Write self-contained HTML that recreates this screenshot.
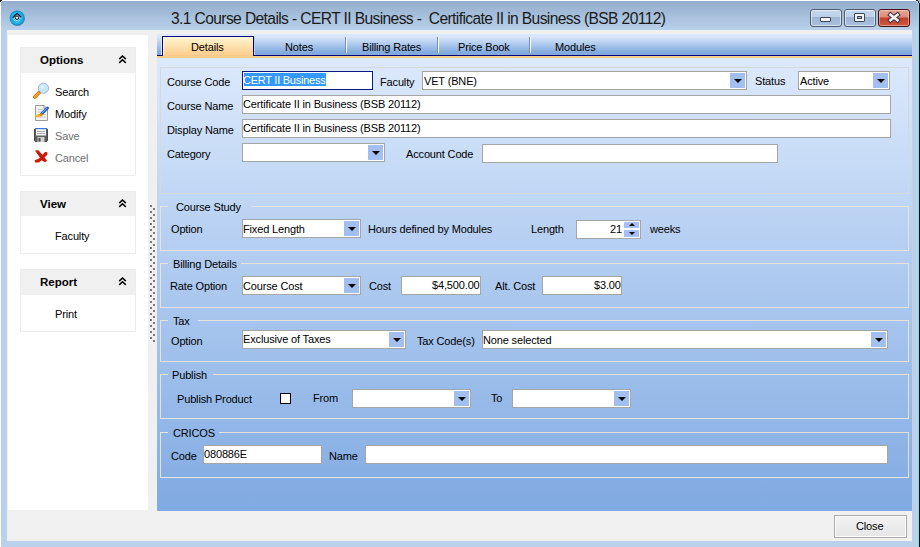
<!DOCTYPE html>
<html><head><meta charset="utf-8">
<style>
*{box-sizing:border-box;margin:0;padding:0}
html,body{width:920px;height:547px;overflow:hidden;background:#fff;font-family:"Liberation Sans",sans-serif;font-size:11px;color:#000}
.a{position:absolute}
.t{position:absolute;white-space:pre;line-height:11px;font-size:11px;letter-spacing:-0.15px;color:#000}
#frame{left:1px;top:1px;width:918px;height:546px;background:#b9d1ea}
#title{left:1px;top:1px;width:917px;height:29px;background:linear-gradient(#93adcc,#b9d1ea)}
#client{left:7px;top:30px;width:905px;height:511px;background:#f0f0f0}
#leftp{left:8px;top:35px;width:140px;height:475px;background:#fff}
.box{position:absolute;left:20px;width:116px;border:1px solid #ededed;background:#fff}
.boxh{position:absolute;left:0;top:0;right:0;background:#f0f0f0}
.hd{font-weight:bold;font-size:11.5px;letter-spacing:0}
.chev{position:absolute;left:118px;width:9px;height:9px}
#tabs{left:157px;top:34px;width:755px;height:21px;background:linear-gradient(#dceafc 0px,#d6e6fb 3px,#80a8dd 19px,#86ace0 21px)}
#navy{left:157px;top:55px;width:755px;height:1px;background:#00007c}
#orange{left:157px;top:56px;width:755px;height:2px;background:#fdd08c}
#panel{left:157px;top:58px;width:755px;height:453px;background:linear-gradient(#dde9fb 0%,#c5daf6 25.2%,#adc9ef 49.4%,#9ebfeb 68.2%,#84ace3 95.8%,#81aae2 100%)}
.grp{position:absolute;left:160px;width:749px;border:1px solid #e6e3dc;border-top:none}
.gl{position:absolute;height:1px;background:#e6e3dc}
.inp{position:absolute;background:#fff;border:1px solid #a5a5a5}
.dd{position:absolute;top:1px;bottom:1px;right:1px;width:15px;background:#a3bff0}
.dd:after{content:"";position:absolute;left:4px;top:6px;border-left:4px solid transparent;border-right:4px solid transparent;border-top:4px solid #000}
.ti{letter-spacing:-0.15px}
.gap{position:absolute;height:6px;background:transparent}
.sep{position:absolute;top:37px;width:2px;height:16px;border-left:1px solid #6a8fc8;border-right:1px solid #fff}
</style></head><body>
<div id="frame" class="a"></div>
<div id="title" class="a"></div>
<div class="a" style="left:918px;top:3px;width:1px;height:544px;background:#7adcf6"></div>
<div class="a" style="left:919px;top:3px;width:1px;height:544px;background:#080808"></div>
<div class="a" style="left:918px;top:0;width:2px;height:3px;background:#b8b8b8"></div>
<div class="a" style="left:916px;top:0;width:2px;height:1px;background:#102020"></div>
<div class="a" style="left:918px;top:1px;width:1px;height:2px;background:#103030"></div>
<div class="a" style="left:916px;top:1px;width:1px;height:1px;background:#b8e4f4"></div>
<div class="a" style="left:917px;top:1px;width:1px;height:2px;background:#a8e8f8"></div>
<div class="a" style="left:0;top:0;width:2px;height:1px;background:#181818"></div>
<div class="a" style="left:0;top:1px;width:1px;height:1px;background:#202020"></div>
<div class="a" style="left:1px;top:1px;width:1px;height:1px;background:#e8f4fa"></div>

<!-- app icon -->
<svg class="a" style="left:9px;top:10px" width="18" height="18" viewBox="0 0 18 18">
 <circle cx="8.4" cy="8.4" r="7.6" fill="#3a4a58" opacity=".55"/>
 <circle cx="8" cy="8" r="7.4" fill="#0c8cc8"/>
 <circle cx="8" cy="7.9" r="6.6" fill="#1eaee8"/>
 <path d="M4 7.5 L8 3.8 L11.8 7.2 L8 11.5 Z" fill="#bfeaff" opacity=".8"/>
 <path d="M3.6 7.8 L8 3.6 L12 7" fill="none" stroke="#101010" stroke-width="1.1"/>
 <path d="M4.2 8.6 L7.2 12.2 M8.8 12.2 L11.8 8.6" fill="none" stroke="#e8faff" stroke-width="1" stroke-dasharray="1 1"/>
 <circle cx="8" cy="7.7" r="1.7" fill="#fff" stroke="#0a0a0a" stroke-width="1"/>
</svg>

<div class="t" style="left:171px;top:11px;font-size:15.6px;line-height:15px;letter-spacing:-0.61px;color:#1a1a1a">3.1 Course Details - CERT II Business -  Certificate II in Business (BSB 20112)</div>

<!-- caption buttons -->
<div class="a" style="left:810px;top:9px;width:32px;height:18px;border:1px solid #4e5b6e;border-radius:3px;background:linear-gradient(#c3d6ec 0,#bcd0e8 7px,#9cb5d3 7px,#a9c1dd 16px);box-shadow:inset 0 0 0 1px rgba(255,255,255,.55)"></div>
<div class="a" style="left:820px;top:17px;width:11px;height:5px;border:1px solid #3d4656;border-radius:1px;background:#f4f4f4"></div>
<div class="a" style="left:844px;top:9px;width:32px;height:18px;border:1px solid #4e5b6e;border-radius:3px;background:linear-gradient(#c3d6ec 0,#bcd0e8 7px,#9cb5d3 7px,#a9c1dd 16px);box-shadow:inset 0 0 0 1px rgba(255,255,255,.55)"></div>
<div class="a" style="left:854px;top:13px;width:11px;height:9px;border:1px solid #3d4656;border-radius:1px;background:#f4f4f4"></div>
<div class="a" style="left:857px;top:16px;width:5px;height:3px;border:1px solid #3d4656;background:#9cb6d6"></div>
<div class="a" style="left:878px;top:9px;width:32px;height:18px;border:1px solid #40101a;border-radius:3px;background:linear-gradient(#e8a493 0,#dc8c78 7px,#c0412a 8px,#d0573c 16px);box-shadow:inset 0 0 0 1px rgba(255,220,210,.5)"></div>
<svg class="a" style="left:886px;top:11px" width="16" height="14" viewBox="0 0 16 14">
 <path d="M4.5 3.8 L11.5 9.2 M11.5 3.8 L4.5 9.2" stroke="#3c3448" stroke-width="4.6" stroke-linecap="square"/>
 <path d="M4.5 3.8 L11.5 9.2 M11.5 3.8 L4.5 9.2" stroke="#f4f4f4" stroke-width="2.6" stroke-linecap="square"/>
</svg>

<div id="client" class="a"></div>
<div id="leftp" class="a"></div>

<!-- left panel boxes -->
<div class="box" style="top:47px;height:129px">
 <div class="boxh" style="height:25px"></div>
</div>
<div class="t hd" style="left:40px;top:55px">Options</div>
<svg class="chev" style="top:55px" viewBox="0 0 9 9"><path d="M1.2 4.1 L4.5 1 L7.8 4.1 M1.2 7.9 L4.5 4.8 L7.8 7.9" fill="none" stroke="#000" stroke-width="1.5"/></svg>

<!-- search icon -->
<svg class="a" style="left:32px;top:82px" width="18" height="17" viewBox="0 0 18 17">
 <path d="M2.8 15 L7.2 10.6" stroke="#c06a10" stroke-width="3.6" stroke-linecap="round"/>
 <path d="M2.8 15 L7.2 10.6" stroke="#f4a428" stroke-width="2.4" stroke-linecap="round"/>
 <path d="M7.5 10.3 L8.6 9.2" stroke="#303040" stroke-width="1.6"/>
 <circle cx="11.5" cy="6.2" r="5.1" fill="#c4eaf8" stroke="#a4a8d8" stroke-width="0.9"/>
 <circle cx="10.2" cy="5" r="1.6" fill="#eefaff" opacity=".8"/>
</svg>
<div class="t" style="left:55px;top:87px;color:#000">Search</div>
<!-- modify icon -->
<svg class="a" style="left:34px;top:104px" width="16" height="18" viewBox="0 0 16 18">
 <path d="M1.5 1.5 H10 L13.5 5 V16.5 H1.5 Z" fill="#f4f4f2" stroke="#9a9a9a"/>
 <path d="M10 1.5 V5 H13.5" fill="#e0e0e0" stroke="#9a9a9a"/>
 <path d="M3.5 5.5h5M3.5 8h8M3.5 10.5h8M3.5 13h8" stroke="#c4c4c4"/>
 <path d="M7.5 10 L13.5 4" stroke="#1f5fd0" stroke-width="3" stroke-linecap="round"/>
 <path d="M8 9.2 L13 4.2" stroke="#8fc0ff" stroke-width="0.9"/>
 <path d="M2 12.2 L7.5 11" stroke="#f6b020" stroke-width="2.4" stroke-linecap="round"/>
 <path d="M6 11.5 L8 9.5" stroke="#e08a10" stroke-width="2.2"/>
</svg>
<div class="t" style="left:55px;top:109px;color:#000">Modify</div>
<!-- save icon -->
<svg class="a" style="left:34px;top:128px" width="14" height="14" viewBox="0 0 14 14">
 <rect x="0.5" y="0.5" width="13" height="13" rx="1.5" fill="#5e5e5e" stroke="#4a4a4a"/>
 <rect x="2" y="1" width="10" height="6.5" fill="#f2f4f6"/>
 <path d="M3 3.5h8M3 5.5h8" stroke="#a8aeb4"/>
 <path d="M1 0.6h12" stroke="#3b78d8" stroke-width="1.2"/>
 <rect x="3.5" y="9" width="7" height="5" fill="#cfcfcf"/>
 <rect x="4.5" y="10" width="2" height="3.5" fill="#4a4a4a"/>
</svg>
<div class="t" style="left:55px;top:131px;color:#707070">Save</div>
<!-- cancel icon -->
<svg class="a" style="left:34px;top:150px" width="14" height="13" viewBox="0 0 14 13">
 <path d="M1 0.5 L4.5 0.3 L13 10.5 L11.5 12.2 L8.5 11 L3 3.5 Z" fill="#cc1a08"/>
 <path d="M0.5 10.5 L5 8.5 L11 2 L13.3 2.2 L13.5 4.5 L8 10 L5 12.5 L1.2 12.4 Z" fill="#c81c06"/>
</svg>
<div class="t" style="left:55px;top:153px;color:#707070">Cancel</div>

<div class="box" style="top:191px;height:63px">
 <div class="boxh" style="height:24px"></div>
</div>
<div class="t hd" style="left:40px;top:199px">View</div>
<svg class="chev" style="top:199px" viewBox="0 0 9 9"><path d="M1.2 4.1 L4.5 1 L7.8 4.1 M1.2 7.9 L4.5 4.8 L7.8 7.9" fill="none" stroke="#000" stroke-width="1.5"/></svg>
<div class="t" style="left:55px;top:231px;color:#000">Faculty</div>

<div class="box" style="top:269px;height:63px">
 <div class="boxh" style="height:25px"></div>
</div>
<div class="t hd" style="left:40px;top:277px">Report</div>
<svg class="chev" style="top:277px" viewBox="0 0 9 9"><path d="M1.2 4.1 L4.5 1 L7.8 4.1 M1.2 7.9 L4.5 4.8 L7.8 7.9" fill="none" stroke="#000" stroke-width="1.5"/></svg>
<div class="t" style="left:55px;top:309px;color:#000">Print</div>

<!-- splitter dots -->
<div class="a" style="left:150px;top:205px;width:6px;height:138px;background-image:radial-gradient(circle at 1px 1px,#7a7a7a 1px,transparent 1.2px),radial-gradient(circle at 4px 4px,#7a7a7a 1px,transparent 1.2px);background-size:6px 6px"></div>

<!-- tabs -->
<div id="tabs" class="a"></div>
<div id="navy" class="a"></div>
<div id="orange" class="a"></div>
<div class="a" style="left:161px;top:35px;width:93px;height:20px;border-left:1px solid #e6f0fc;border-top:1px solid #e6f0fc"></div>
<div class="a" style="left:162px;top:36px;width:92px;height:20px;border:1px solid #00007c;border-bottom:none;background:linear-gradient(#fff6d0,#fdcb8a);box-shadow:inset 1px 1px 0 #fffbe0"></div>
<div class="a" style="left:163px;top:55px;width:90px;height:1px;background:#fdc98a"></div>
<div class="a" style="left:254px;top:37px;width:1px;height:18px;background:#b8d2f4"></div>
<div class="t" style="left:191px;top:42px">Details</div>
<div class="t" style="left:285px;top:42px">Notes</div>
<div class="sep" style="left:345px"></div>
<div class="t" style="left:362px;top:42px">Billing Rates</div>
<div class="sep" style="left:437px"></div>
<div class="t" style="left:458px;top:42px">Price Book</div>
<div class="sep" style="left:529px"></div>
<div class="t" style="left:555px;top:42px">Modules</div>
<div id="panel" class="a"></div>

<!-- details group -->
<div class="a" style="left:160px;top:67px;width:749px;height:127px;border:1px solid #d6d9dc"></div>
<div class="t" style="left:167px;top:77px">Course Code</div>
<div class="a" style="left:242px;top:71px;width:131px;height:19px;border:1px solid #0c1a80;background:#fff"></div>
<div class="a" style="left:244px;top:73px;width:82px;height:13px;background:#3399ff"></div>
<div class="t ti" style="left:243px;top:75px;color:#fff;letter-spacing:-0.25px">CERT II Business</div>
<div class="t" style="left:380px;top:77px">Faculty</div>
<div class="inp" style="left:422px;top:71px;width:325px;height:19px"><div class="dd"></div></div>
<div class="t ti" style="left:424px;top:76px">VET (BNE)</div>
<div class="t" style="left:755px;top:76px">Status</div>
<div class="inp" style="left:798px;top:71px;width:92px;height:19px"><div class="dd"></div></div>
<div class="t ti" style="left:800px;top:76px">Active</div>

<div class="t" style="left:167px;top:101px">Course Name</div>
<div class="inp" style="left:242px;top:95px;width:649px;height:19px"></div>
<div class="t ti" style="left:243px;top:99px">Certificate II in Business (BSB 20112)</div>
<div class="t" style="left:167px;top:125px">Display Name</div>
<div class="inp" style="left:242px;top:119px;width:649px;height:19px"></div>
<div class="t ti" style="left:243px;top:123px">Certificate II in Business (BSB 20112)</div>
<div class="t" style="left:167px;top:149px">Category</div>
<div class="inp" style="left:242px;top:143px;width:143px;height:19px"><div class="dd"></div></div>
<div class="t" style="left:406px;top:149px">Account Code</div>
<div class="inp" style="left:482px;top:144px;width:296px;height:19px"></div>

<!-- course study -->
<div class="grp" style="top:206px;height:45px"></div>
<div class="gl" style="left:160px;top:206px;width:8px"></div>
<div class="gl" style="left:251px;top:206px;width:658px"></div>
<div class="t" style="left:176px;top:202px">Course Study</div>
<div class="t" style="left:171px;top:224px">Option</div>
<div class="inp" style="left:242px;top:219px;width:119px;height:19px"><div class="dd"></div></div>
<div class="t ti" style="left:243px;top:224px">Fixed Length</div>
<div class="t" style="left:368px;top:224px">Hours defined by Modules</div>
<div class="t" style="left:531px;top:224px">Length</div>
<div class="inp" style="left:576px;top:220px;width:65px;height:19px"></div>
<div class="a" style="left:624px;top:222px;width:15px;height:6px;background:#a4c0f4"></div>
<div class="a" style="left:624px;top:230px;width:15px;height:7px;background:#a4c0f4"></div>
<div class="a" style="left:629px;top:223px;width:0;height:0;border-left:3px solid transparent;border-right:3px solid transparent;border-bottom:3px solid #000"></div>
<div class="a" style="left:629px;top:232px;width:0;height:0;border-left:3px solid transparent;border-right:3px solid transparent;border-top:3px solid #000"></div>
<div class="t ti" style="left:610px;top:224px">21</div>
<div class="t" style="left:650px;top:224px">weeks</div>

<!-- billing -->
<div class="grp" style="top:263px;height:45px"></div>
<div class="gl" style="left:160px;top:263px;width:8px"></div>
<div class="gl" style="left:241px;top:263px;width:668px"></div>
<div class="t" style="left:173px;top:259px">Billing Details</div>
<div class="t" style="left:170px;top:281px">Rate Option</div>
<div class="inp" style="left:242px;top:276px;width:119px;height:19px"><div class="dd"></div></div>
<div class="t ti" style="left:243px;top:281px">Course Cost</div>
<div class="t" style="left:369px;top:281px">Cost</div>
<div class="inp" style="left:401px;top:276px;width:80px;height:19px"></div>
<div class="t ti" style="left:432px;top:280px">$4,500.00</div>
<div class="t" style="left:495px;top:281px">Alt. Cost</div>
<div class="inp" style="left:542px;top:276px;width:80px;height:19px"></div>
<div class="t ti" style="left:594px;top:280px">$3.00</div>

<!-- tax -->
<div class="grp" style="top:320px;height:42px"></div>
<div class="gl" style="left:160px;top:320px;width:8px"></div>
<div class="gl" style="left:198px;top:320px;width:711px"></div>
<div class="t" style="left:173px;top:316px">Tax</div>
<div class="t" style="left:171px;top:336px">Option</div>
<div class="inp" style="left:242px;top:330px;width:164px;height:19px"><div class="dd"></div></div>
<div class="t ti" style="left:243px;top:334px">Exclusive of Taxes</div>
<div class="t" style="left:417px;top:336px">Tax Code(s)</div>
<div class="inp" style="left:482px;top:330px;width:406px;height:19px"><div class="dd"></div></div>
<div class="t ti" style="left:483px;top:335px">None selected</div>

<!-- publish -->
<div class="grp" style="top:374px;height:45px"></div>
<div class="gl" style="left:160px;top:374px;width:8px"></div>
<div class="gl" style="left:213px;top:374px;width:696px"></div>
<div class="t" style="left:172px;top:370px">Publish</div>
<div class="t" style="left:177px;top:394px">Publish Product</div>
<div class="a" style="left:280px;top:393px;width:11px;height:11px;border:1px solid #000;background:#fff"></div>
<div class="t" style="left:313px;top:393px">From</div>
<div class="inp" style="left:352px;top:389px;width:119px;height:19px"><div class="dd"></div></div>
<div class="t" style="left:491px;top:393px">To</div>
<div class="inp" style="left:512px;top:389px;width:119px;height:19px"><div class="dd"></div></div>

<!-- cricos -->
<div class="grp" style="top:432px;height:46px"></div>
<div class="gl" style="left:160px;top:432px;width:8px"></div>
<div class="gl" style="left:219px;top:432px;width:690px"></div>
<div class="t" style="left:173px;top:428px">CRICOS</div>
<div class="t" style="left:171px;top:451px">Code</div>
<div class="inp" style="left:203px;top:445px;width:119px;height:19px"></div>
<div class="t ti" style="left:204px;top:449px">080886E</div>
<div class="t" style="left:329px;top:451px">Name</div>
<div class="inp" style="left:365px;top:445px;width:523px;height:19px"></div>

<!-- close button -->
<div class="a" style="left:834px;top:515px;width:73px;height:23px;border:1px solid #acacac;background:linear-gradient(#f2f2f2,#e6e6e6);box-shadow:inset 0 0 0 1px #fbfbfb"></div>
<div class="t" style="left:856px;top:521px">Close</div>

</body></html>
